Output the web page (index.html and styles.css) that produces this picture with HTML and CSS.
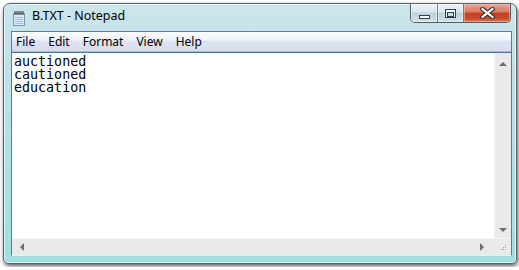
FILE: index.html
```html
<!DOCTYPE html>
<html>
  <head>
    <title>B.TXT - Notepad</title>
    <link rel="stylesheet" href="styles.css">
  </head>
  <body>
    <div class="window">
      <div class="titlebar">
        <svg class="app-icon" width="14" height="16" viewBox="0 0 14 16">
          <rect x="1.5" y="3.5" width="11" height="12" fill="#dce9f6" stroke="#7a98b8"/>
          <line x1="3" y1="7.5" x2="11" y2="7.5" stroke="#a9c0d8"/>
          <line x1="3" y1="9.5" x2="11" y2="9.5" stroke="#a9c0d8"/>
          <line x1="3" y1="11.5" x2="11" y2="11.5" stroke="#a9c0d8"/>
          <line x1="3" y1="13.5" x2="11" y2="13.5" stroke="#a9c0d8"/>
          <path d="M3 1v4M5 1v4M7 1v4M9 1v4M11 1v4" stroke="#333" stroke-width="1"/>
        </svg>
        <span class="title">B.TXT - Notepad</span>
        <div class="caption-buttons">
          <div class="cap-btn min"><span class="glyph-min"></span></div>
          <div class="cap-btn max"><span class="glyph-max"></span></div>
          <div class="cap-btn close">
            <svg width="15" height="12" viewBox="0 0 15 12">
              <path d="M2.5 2 L12.5 10 M12.5 2 L2.5 10" stroke="#3b2a2a" stroke-width="4.2" stroke-linecap="square"/>
              <path d="M2.5 2 L12.5 10 M12.5 2 L2.5 10" stroke="#fff" stroke-width="2.2" stroke-linecap="square"/>
            </svg>
          </div>
        </div>
      </div>

      <div class="client">
        <div class="menubar">
          <span class="menu-item">File</span>
          <span class="menu-item">Edit</span>
          <span class="menu-item">Format</span>
          <span class="menu-item">View</span>
          <span class="menu-item">Help</span>
        </div>
        <div class="editor">
          <div class="text">auctioned
cautioned
education</div>
          <div class="vscroll">
            <span class="arrow up"></span>
            <span class="arrow down"></span>
          </div>
          <div class="hscroll">
            <span class="arrow left"></span>
            <span class="arrow right"></span>
          </div>
          <div class="grip">
            <svg width="17" height="17" viewBox="0 0 17 17">
              <g fill="#9a9a9a">
                <rect x="11" y="6" width="1" height="1"/>
                <rect x="9" y="8" width="1" height="1"/>
                <rect x="11" y="8" width="1" height="1"/>
                <rect x="7" y="10" width="1" height="1"/>
                <rect x="9" y="10" width="1" height="1"/>
                <rect x="11" y="10" width="1" height="1"/>
              </g>
              <g fill="#fff">
                <rect x="12" y="7" width="1" height="1"/>
                <rect x="10" y="9" width="1" height="1"/>
                <rect x="12" y="9" width="1" height="1"/>
                <rect x="8" y="11" width="1" height="1"/>
                <rect x="10" y="11" width="1" height="1"/>
                <rect x="12" y="11" width="1" height="1"/>
              </g>
            </svg>
          </div>
        </div>
      </div>
    </div>
  </body>
</html>
```

FILE: styles.css
```css
* {
  box-sizing: border-box;
}

body {
  margin: 0;
  padding: 3px;
  background: #fff;
  font-family: "Noto Sans", "DejaVu Sans", sans-serif;
  color: #000;
}

/* Window frame */
.window {
  width: 514px;
  height: 261px;
  border: 1px solid #56636c;
  border-radius: 7px 7px 5px 5px;
  background: linear-gradient(#cbe5eb, #bde2e7 30%, #a9e0e1 75%, #a2dfdf);
  box-shadow: 1px 2px 4px rgba(0, 0, 0, 0.65), inset 0 0 0 1px rgba(255, 255, 255, 0.6);
  display: flex;
  flex-direction: column;
}

.titlebar {
  height: 27px;
  display: flex;
  align-items: flex-start;
  padding-left: 8px;
  padding-right: 5px;
}

.app-icon {
  margin-top: 6px;
}

.title {
  margin-left: 6px;
  margin-top: 4px;
  font-size: 12.5px;
  line-height: 16px;
}

/* Caption buttons */
.caption-buttons {
  margin-left: auto;
  display: flex;
  height: 19px;
  border: 1px solid #4f5c66;
  border-top: none;
  border-radius: 0 0 5px 5px;
  overflow: hidden;
}

.cap-btn {
  display: flex;
  align-items: center;
  justify-content: center;
  background: linear-gradient(#ecf4f7 0%, #d8e6ec 45%, #bcd1d9 50%, #cfe2e8 100%);
  box-shadow: inset 0 0 0 1px rgba(255, 255, 255, 0.5);
}

.min {
  width: 27px;
  border-right: 1px solid #6f7f8a;
}

.max {
  width: 26px;
  border-right: 1px solid #6f7f8a;
}

.close {
  width: 46px;
  background: linear-gradient(#e9a596 0%, #d97a64 45%, #c5401f 50%, #c94b2c 80%, #d97a5a 100%);
  box-shadow: inset 0 0 0 1px rgba(255, 210, 200, 0.5);
}

.glyph-min {
  width: 11px;
  height: 4px;
  margin-top: 7px;
  background: #fff;
  border: 1px solid #2f3e49;
}

.glyph-max {
  position: relative;
  width: 11px;
  height: 9px;
  background: #fff;
  border: 1px solid #2f3e49;
}

.glyph-max::after {
  content: "";
  position: absolute;
  left: 1px;
  top: 2px;
  width: 5px;
  height: 3px;
  border: 1px solid #2f3e49;
  background: #c9dbe2;
}

/* Client area */
.client {
  flex: 1;
  margin: 0 4px 7px 7px;
  border: 1px solid #61798c;
  border-bottom-color: #dff1f2;
  display: flex;
  flex-direction: column;
  background: #fff;
}

.menubar {
  height: 20px;
  display: flex;
  font-size: 12px;
  line-height: 19px;
  border-bottom: 1px solid #b3b8c2;
  background: linear-gradient(#fbfcfe, #eff2f9 40%, #dee3f2 50%, #d7ddef);
}

.menu-item {
  padding: 0 6px 0 7px;
}

.menu-item:first-child {
  padding-left: 4px;
}

.editor {
  flex: 1;
  border-top: 1px solid #3f79a8;
  display: grid;
  grid-template-columns: 1fr 17px;
  grid-template-rows: 1fr 17px;
}

.text {
  padding: 2px 0 0 2px;
  font-family: "DejaVu Sans Mono", monospace;
  font-size: 13.33px;
  line-height: 13px;
  white-space: pre;
  overflow: hidden;
}

/* Scrollbars */
.vscroll {
  background: #eaeaea;
  border-left: 1px solid #f5f5f5;
  display: flex;
  flex-direction: column;
  justify-content: space-between;
  align-items: center;
  padding: 9px 0 6px;
}

.hscroll {
  background: #eaeaea;
  border-top: 1px solid #f5f5f5;
  display: flex;
  justify-content: space-between;
  align-items: center;
  padding: 0 10px 0 8px;
}

.grip {
  background: #eaeaea;
  border-top: 1px solid #f5f5f5;
}

.arrow {
  width: 0;
  height: 0;
  border: 4px solid transparent;
}

.arrow.up {
  border-top-width: 0;
  border-bottom-color: #6e6e6e;
}

.arrow.down {
  border-bottom-width: 0;
  border-top-color: #6e6e6e;
}

.arrow.left {
  border-left-width: 0;
  border-right-color: #6e6e6e;
}

.arrow.right {
  border-right-width: 0;
  border-left-color: #6e6e6e;
}
```
